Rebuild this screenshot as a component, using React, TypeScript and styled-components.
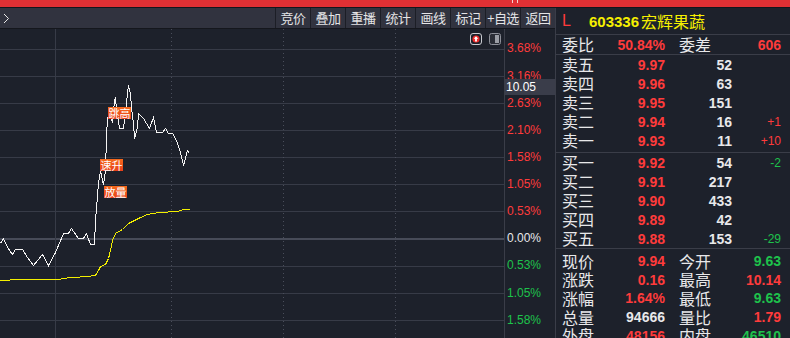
import styled, { createGlobalStyle } from 'styled-components';

const RED = '#ff3b3b';
const GREEN = '#1ec24b';
const WHITE = '#e8e8ea';
const YELLOW = '#f6ef00';
const GRID = '#373b47';
const BG = '#1d212b';

const GlobalStyle = createGlobalStyle`
  html, body {
    margin: 0;
    padding: 0;
    background: ${BG};
  }
  body {
    width: 790px;
    height: 338px;
    overflow: hidden;
    font-family: "Liberation Sans", "Noto Sans CJK SC", sans-serif;
  }
`;

type Tone = 'up' | 'down' | 'flat';
const toneColor = (t: Tone) => (t === 'up' ? RED : t === 'down' ? GREEN : WHITE);

const TOOLS = ['竞价', '叠加', '重播', '统计', '画线', '标记', '+自选', '返回'];

const AXIS: { text: string; tone: Tone }[] = [
  { text: '3.68%', tone: 'up' },
  { text: '3.16%', tone: 'up' },
  { text: '2.63%', tone: 'up' },
  { text: '2.10%', tone: 'up' },
  { text: '1.58%', tone: 'up' },
  { text: '1.05%', tone: 'up' },
  { text: '0.53%', tone: 'up' },
  { text: '0.00%', tone: 'flat' },
  { text: '0.53%', tone: 'down' },
  { text: '1.05%', tone: 'down' },
  { text: '1.58%', tone: 'down' },
];

const SELL = [
  { label: '卖五', price: '9.97', qty: '52', diff: '' },
  { label: '卖四', price: '9.96', qty: '63', diff: '' },
  { label: '卖三', price: '9.95', qty: '151', diff: '' },
  { label: '卖二', price: '9.94', qty: '16', diff: '+1' },
  { label: '卖一', price: '9.93', qty: '11', diff: '+10' },
];

const BUY = [
  { label: '买一', price: '9.92', qty: '54', diff: '-2' },
  { label: '买二', price: '9.91', qty: '217', diff: '' },
  { label: '买三', price: '9.90', qty: '433', diff: '' },
  { label: '买四', price: '9.89', qty: '42', diff: '' },
  { label: '买五', price: '9.88', qty: '153', diff: '-29' },
];

const STATS: { l1: string; v1: string; t1: Tone; l2: string; v2: string; t2: Tone }[] = [
  { l1: '现价', v1: '9.94', t1: 'up', l2: '今开', v2: '9.63', t2: 'down' },
  { l1: '涨跌', v1: '0.16', t1: 'up', l2: '最高', v2: '10.14', t2: 'up' },
  { l1: '涨幅', v1: '1.64%', t1: 'up', l2: '最低', v2: '9.63', t2: 'down' },
  { l1: '总量', v1: '94666', t1: 'flat', l2: '量比', v2: '1.79', t2: 'up' },
  { l1: '外盘', v1: '48156', t1: 'up', l2: '内盘', v2: '46510', t2: 'down' },
];

// chart coordinates are relative to the plot's top-left corner (page y - 29)
const TOP = 29;
const PRICE_LINE: [number, number][] = [
  [0, 243], [3, 238], [7, 247], [12, 254], [15, 249], [22, 249], [27, 257], [33, 265],
  [42, 254], [48, 265], [55, 252], [63, 233], [68, 233], [71, 228], [78, 238], [83, 238],
  [86, 233], [90, 244], [94, 244], [95, 220], [97, 195], [98, 182], [99, 177], [100, 170],
  [102, 180], [103, 184], [105, 170], [106, 137], [107, 117], [110, 117], [112, 122],
  [114, 100], [115, 97], [116, 110], [117, 115], [119, 128], [123, 128], [125, 110],
  [126, 103], [127, 92], [128, 85], [130, 93], [131, 107], [132, 115], [133, 123],
  [134, 138], [137, 127], [138, 113], [143, 118], [149, 128], [153, 117], [156, 132],
  [162, 132], [165, 128], [168, 133], [172, 133], [175, 138], [177, 143], [180, 152],
  [183, 165], [187, 150], [189, 153],
];
const AVG_LINE: [number, number][] = [
  [0, 280], [20, 279], [60, 279], [61, 278], [72, 277], [87, 276], [95, 275], [98, 270],
  [100, 266], [105, 264], [108, 258], [110, 250], [112, 240], [115, 233], [122, 229],
  [128, 223], [132, 221], [140, 217], [147, 214], [158, 212], [177, 211], [183, 209],
  [189, 209],
];
const H_LINES = [49, 76, 103, 130, 157, 184, 211, 239, 266, 293, 320];

const toPoints = (pts: [number, number][]) =>
  pts.map(([x, y]) => `${x + 0.5},${y - TOP + 0.5}`).join(' ');

const SIGNALS = [
  { text: '跳高', x: 108, y: 107 },
  { text: '速升', x: 100, y: 159 },
  { text: '放量', x: 104, y: 186 },
];

const Frame = styled.div`
  width: 790px;
  height: 338px;
  display: flex;
  flex-direction: column;
  background: ${BG};
  overflow: hidden;
`;

const TitleBar = styled.div`
  height: 7px;
  flex: none;
  background: #e03034;
  border-bottom: 1px solid #14161c;
  display: flex;
  justify-content: flex-end;
  padding-right: 272px;
`;

const TitleMark = styled.span`
  width: 4px;
  height: 3px;
  border-left: 1px solid #f4d0d0;
  border-right: 1px solid #f4d0d0;
`;

const Body = styled.div`
  flex: 1;
  display: flex;
  min-height: 0;
`;

const ChartSide = styled.div`
  width: 555px;
  flex: none;
  display: flex;
  flex-direction: column;
  border-right: 1px solid #3a3d48;
`;

const Toolbar = styled.div`
  height: 20px;
  flex: none;
  display: flex;
  background: #31333f;
  border-bottom: 1px solid #15171d;
`;

const Expander = styled.div`
  flex: 1;
  display: flex;
  align-items: center;
  padding-left: 3px;
`;

const ToolButton = styled.div`
  width: 34px;
  border-left: 1px solid #1c1e26;
  display: flex;
  align-items: center;
  justify-content: center;
  color: #e4e4e6;
  font-size: 13px;
  line-height: 16px;
  font-family: "Noto Sans CJK SC", sans-serif;
  white-space: nowrap;
  letter-spacing: -0.6px;
`;

const ChartBody = styled.div`
  flex: 1;
  display: flex;
  min-height: 0;
`;

const Plot = styled.div`
  flex: 1;
  position: relative;
  overflow: hidden;
`;

const PlotSvg = styled.svg`
  display: block;
`;

const PlotIcons = styled.div`
  position: absolute;
  top: 4px;
  right: 3px;
  display: flex;
  gap: 7px;
`;

const Signal = styled.div`
  position: absolute;
  width: 23px;
  height: 12px;
  background: linear-gradient(180deg, #f56a1c, #e8401a);
  color: #fff;
  font-family: "Noto Sans CJK SC", sans-serif;
  font-size: 11px;
  line-height: 12px;
  text-align: center;
  white-space: nowrap;
`;

const Axis = styled.div`
  width: 50px;
  flex: none;
  position: relative;
  border-left: 1px solid #3a3d48;
  padding-top: 6.4px;
  display: flex;
  flex-direction: column;
`;

const AxisLabel = styled.div<{ $tone: Tone }>`
  height: 27.14px;
  line-height: 27.14px;
  padding-left: 2px;
  font-size: 12px;
  color: ${({ $tone }) => toneColor($tone)};
`;

const PriceTag = styled.div`
  position: absolute;
  top: 50px;
  left: 0;
  right: 0;
  height: 16px;
  background: #3a3d4a;
  color: #fff;
  font-size: 12px;
  line-height: 16px;
  padding-left: 1px;
`;

const QuotePanel = styled.div`
  flex: 1;
  display: flex;
  flex-direction: column;
  background: ${BG};
`;

const QuoteHeader = styled.div`
  height: 26px;
  flex: none;
  display: flex;
  align-items: center;
  padding-left: 6px;
  border-bottom: 1px solid #3a3d48;
`;

const Market = styled.span`
  color: ${RED};
  font-size: 16px;
  width: 27px;
`;

const Code = styled.span`
  color: ${YELLOW};
  font-size: 15px;
  font-weight: bold;
  margin-right: 2px;
`;

const Name = styled.span`
  color: ${YELLOW};
  font-family: "Noto Sans CJK SC", sans-serif;
  font-size: 16px;
  line-height: 18px;
`;

const Section = styled.div<{ $padTop?: number; $padBottom?: number }>`
  flex: none;
  padding: ${({ $padTop = 0 }) => $padTop}px 8px ${({ $padBottom = 0 }) => $padBottom}px 6px;
  border-bottom: 1px solid #3a3d48;
`;

const LastSection = styled(Section)`
  border-bottom: none;
`;

const BookRow = styled.div`
  display: grid;
  grid-template-columns: 50px 53px 67px 49px;
  height: 19px;
  align-items: center;
`;

const StatRow = styled.div<{ $h?: number }>`
  display: grid;
  grid-template-columns: 50px 53px 64px 52px;
  height: ${({ $h = 18.6 }) => $h}px;
  align-items: center;
`;

const Label = styled.span<{ $indent?: boolean }>`
  color: ${WHITE};
  font-family: "Noto Sans CJK SC", sans-serif;
  font-size: 16px;
  line-height: 17px;
  padding-left: ${({ $indent }) => ($indent ? '14px' : '0')};
`;

const Value = styled.span<{ $tone: Tone }>`
  color: ${({ $tone }) => toneColor($tone)};
  font-size: 14px;
  font-weight: bold;
  text-align: right;
  line-height: 16px;
`;

const Diff = styled.span<{ $tone: Tone }>`
  color: ${({ $tone }) => toneColor($tone)};
  font-size: 12px;
  text-align: right;
  line-height: 14px;
`;

function Chevron() {
  return (
    <svg width="7" height="11" viewBox="0 0 7 11">
      <polyline points="1,1 5.5,5.5 1,10" fill="none" stroke="#e8e8e8" strokeWidth="1" />
    </svg>
  );
}

function RiseIcon() {
  return (
    <svg width="12" height="12" viewBox="0 0 12 12">
      <rect x="0.5" y="0.5" width="11" height="11" rx="2.5" fill="none" stroke="#c9cbd1" />
      <circle cx="6" cy="6" r="3.6" fill="#f02a2a" />
      <path d="M6 3.2 L8.3 5.8 H6.9 V8.4 H5.1 V5.8 H3.7 Z" fill="#fff" />
    </svg>
  );
}

function PanelIcon() {
  return (
    <svg width="12" height="12" viewBox="0 0 12 12">
      <rect x="0.5" y="0.5" width="11" height="11" rx="2" fill="#2a2d36" stroke="#8c8f98" />
      <rect x="6" y="2" width="4" height="8" fill="#9b9ea6" />
    </svg>
  );
}

function IntradayChart() {
  const w = 504;
  const h = 309;
  return (
    <PlotSvg width={w} height={h} viewBox={`0 0 ${w} ${h}`} shapeRendering="crispEdges">
      {H_LINES.map((y) => (
        <line
          key={y}
          x1={0}
          x2={w}
          y1={y - TOP + (y === 239 ? 0 : 0.5)}
          y2={y - TOP + (y === 239 ? 0 : 0.5)}
          stroke={y === 239 ? '#474b58' : GRID}
          strokeWidth={y === 239 ? 2 : 1}
        />
      ))}
      <line x1={55.5} x2={55.5} y1={0} y2={h} stroke={GRID} />
      {[171, 283, 395].map((x) => (
        <line
          key={x}
          x1={x + 0.5}
          x2={x + 0.5}
          y1={0}
          y2={h}
          stroke="#4a4e5b"
          strokeDasharray="1 3"
        />
      ))}
      <polyline points={toPoints(AVG_LINE)} fill="none" stroke="#f2ee00" strokeWidth={1} />
      <polyline points={toPoints(PRICE_LINE)} fill="none" stroke="#f4f4f4" strokeWidth={1} />
    </PlotSvg>
  );
}

export default function App() {
  return (
    <>
      <GlobalStyle />
      <Frame>
        <TitleBar>
          <TitleMark />
        </TitleBar>
        <Body>
          <ChartSide>
            <Toolbar>
              <Expander>
                <Chevron />
              </Expander>
              {TOOLS.map((t) => (
                <ToolButton key={t}>{t}</ToolButton>
              ))}
            </Toolbar>
            <ChartBody>
              <Plot>
                <IntradayChart />
                <PlotIcons>
                  <RiseIcon />
                  <PanelIcon />
                </PlotIcons>
                {SIGNALS.map((s) => (
                  <Signal key={s.text} style={{ left: s.x, top: s.y - TOP }}>
                    {s.text}
                  </Signal>
                ))}
              </Plot>
              <Axis>
                {AXIS.map((a, i) => (
                  <AxisLabel key={i} $tone={a.tone}>
                    {a.text}
                  </AxisLabel>
                ))}
                <PriceTag>10.05</PriceTag>
              </Axis>
            </ChartBody>
          </ChartSide>
          <QuotePanel>
            <QuoteHeader>
              <Market>L</Market>
              <Code>603336</Code>
              <Name>宏辉果蔬</Name>
            </QuoteHeader>
            <Section>
              <StatRow $h={19}>
                <Label>委比</Label>
                <Value $tone="up">50.84%</Value>
                <Label $indent>委差</Label>
                <Value $tone="up">606</Value>
              </StatRow>
            </Section>
            <Section $padBottom={2}>
              {SELL.map((r) => (
                <BookRow key={r.label}>
                  <Label>{r.label}</Label>
                  <Value $tone="up">{r.price}</Value>
                  <Value $tone="flat">{r.qty}</Value>
                  <Diff $tone="up">{r.diff}</Diff>
                </BookRow>
              ))}
            </Section>
            <Section>
              {BUY.map((r) => (
                <BookRow key={r.label}>
                  <Label>{r.label}</Label>
                  <Value $tone="up">{r.price}</Value>
                  <Value $tone="flat">{r.qty}</Value>
                  <Diff $tone="down">{r.diff}</Diff>
                </BookRow>
              ))}
            </Section>
            <LastSection $padTop={3}>
              {STATS.map((s) => (
                <StatRow key={s.l1}>
                  <Label>{s.l1}</Label>
                  <Value $tone={s.t1}>{s.v1}</Value>
                  <Label $indent>{s.l2}</Label>
                  <Value $tone={s.t2}>{s.v2}</Value>
                </StatRow>
              ))}
            </LastSection>
          </QuotePanel>
        </Body>
      </Frame>
    </>
  );
}
